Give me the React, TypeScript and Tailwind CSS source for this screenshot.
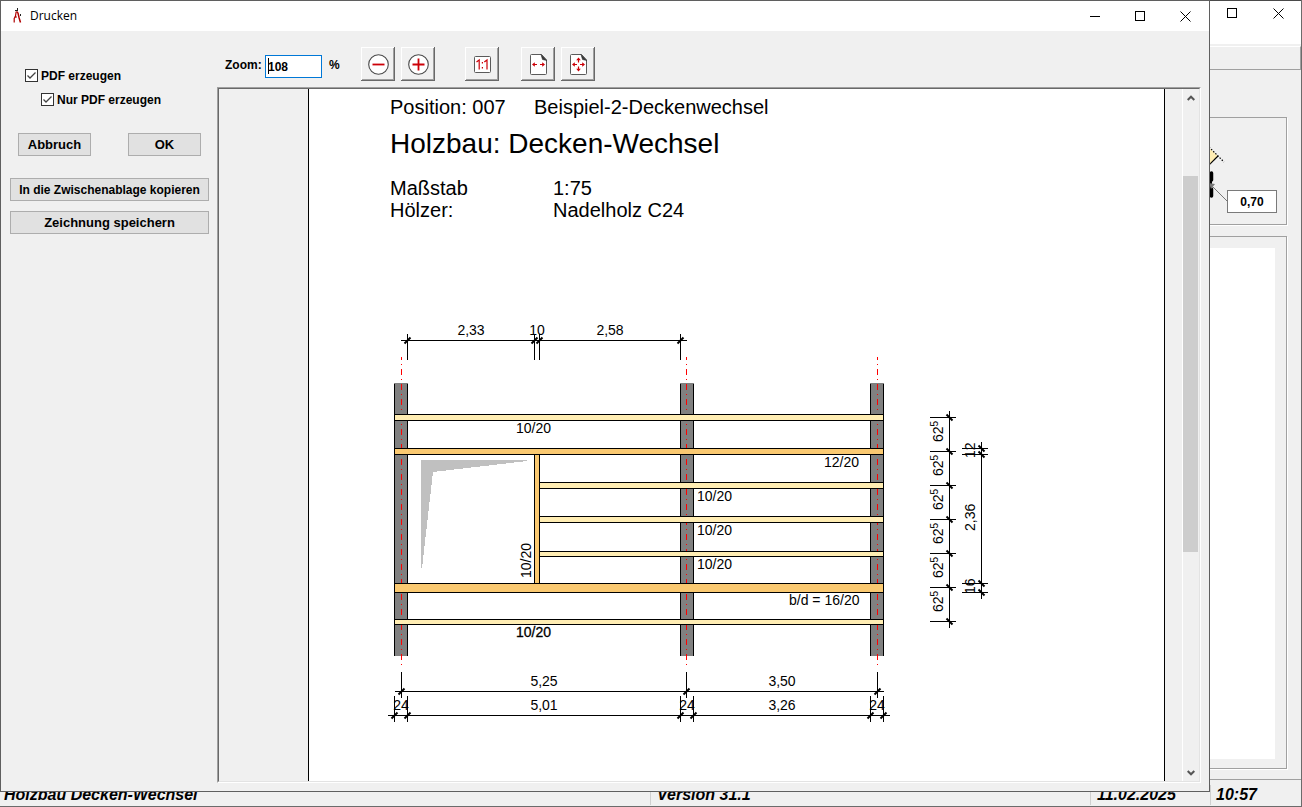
import React from "react";

const YELLOW = "#ffedb3";
const ORANGE = "#fac971";

function Minimize() {
  return (
    <svg width="11" height="11" viewBox="0 0 11 11" shapeRendering="crispEdges">
      <rect x="0" y="5" width="10" height="1" fill="#000" />
    </svg>
  );
}

function Maximize() {
  return (
    <svg width="11" height="11" viewBox="0 0 11 11" shapeRendering="crispEdges">
      <rect x="0.5" y="0.5" width="9" height="9" fill="none" stroke="#000" />
    </svg>
  );
}

function Close() {
  return (
    <svg width="11" height="11" viewBox="0 0 11 11">
      <path d="M0.5 0.5 L10.5 10.5 M10.5 0.5 L0.5 10.5" stroke="#000" strokeWidth="1" />
    </svg>
  );
}

function AppIcon() {
  return (
    <svg width="12" height="16" viewBox="0 0 12 16" aria-hidden="true">
      <path d="M4.2 3.5 L3.4 8.500 L2.200 10.500 L2.2 14.500" fill="none" stroke="#b00000" strokeWidth="1.2" />
      <path d="M4.6 3.5 L6 5 L7 9.500 L8.5 14.500" fill="none" stroke="#b00000" strokeWidth="1.5" />
      <path d="M2.5 9 H5" stroke="#b00000" strokeWidth="1" />
      <rect x="5" y="0" width="1" height="3" fill="#222" />
      <rect x="3" y="2" width="3" height="1" fill="#222" />
      <rect x="8" y="6" width="1" height="2" fill="#222" />
    </svg>
  );
}

function ToolButton({ label, children }: { label: string; children: React.ReactNode }) {
  return (
    <button
      type="button"
      aria-label={label}
      className="flex size-[34px] shrink-0 items-center justify-center bg-[#f0f0f0] pt-px pl-px shadow-[inset_-1px_-1px_#696969,inset_1px_1px_#ffffff,inset_-2px_-2px_#a0a0a0]"
    >
      {children}
    </button>
  );
}

function CircleIcon({ plus }: { plus?: boolean }) {
  return (
    <svg width="21" height="21" viewBox="0 0 21 21">
      <circle cx="10.5" cy="10.5" r="9.8" fill="#fff" stroke="#4a4a4a" strokeWidth="1.1" />
      <path d={plus ? "M4.5 10.5 H16.500 M10.5 4.500 V16.500" : "M4.5 10.5 H16.500"} stroke="#cc0008" strokeWidth="1.8" />
    </svg>
  );
}

function OneToOneIcon() {
  return (
    <svg width="17" height="17" viewBox="0 0 17 17">
      <rect x="0.5" y="0.5" width="16" height="16" rx="1" fill="#fff" stroke="#5a5a5a" />
      <path d="M2.500 6 L5.2 4 V13.500 M10.300 6 L13 4 V13.500" fill="none" stroke="#cc0008" strokeWidth="1.2" />
      <rect x="7.800" y="6" width="1.2" height="1.5" fill="#cc0008" />
      <rect x="7.800" y="11" width="1.2" height="1.5" fill="#cc0008" />
    </svg>
  );
}

function SheetIcon({ all }: { all?: boolean }) {
  return (
    <svg width="17" height="21" viewBox="0 0 17 21">
      <path
        d="M1.5 0.5 H11.500 L16.500 6 V19.500 Q16.500 20.500 15.500 20.500 H1.500 Q0.500 20.500 0.500 19.500 V1.500 Q0.500 0.500 1.500 0.500 Z"
        fill="#fff"
        stroke="#5a5a5a"
      />
      <path d="M11 0.500 L16.800 6.500 L12.500 5.500 Z" fill="#333" stroke="#333" strokeWidth="0.6" />
      <path
        d="M2 10.5 L4.800 8.2 V9.900 H7 V11.100 H4.800 V12.800 Z M15 10.5 L12.200 8.2 V9.900 H10 V11.100 H12.200 V12.800 Z"
        fill="#cc0008"
      />
      {all && (
        <path
          d="M8.5 3.500 L6.200 6.300 H7.900 V8.500 H9.100 V6.300 H10.800 Z M8.5 17.500 L6.200 14.700 H7.900 V12.500 H9.100 V14.700 H10.800 Z"
          fill="#cc0008"
        />
      )}
    </svg>
  );
}

function CheckOption({ id, label, indent }: { id: string; label: string; indent?: boolean }) {
  return (
    <div className={indent ? "ml-4 flex h-[13px] items-center gap-[3px]" : "flex h-[13px] items-center gap-[3px]"}>
      <span className="relative flex size-[13px]">
        <input
          id={id}
          type="checkbox"
          defaultChecked
          className="peer size-[13px] appearance-none border border-[#333333] bg-white"
        />
        <svg
          className="pointer-events-none absolute inset-0 hidden peer-checked:block"
          width="13"
          height="13"
          viewBox="0 0 13 13"
        >
          <path d="M2.5 6.5 L5 9 L10.5 3.5" fill="none" stroke="#444" strokeWidth="1.3" />
        </svg>
      </span>
      <label htmlFor={id} className="pt-0.5 text-[12px] leading-[13px] font-bold whitespace-nowrap">
        {label}
      </label>
    </div>
  );
}

const pushButton =
  "flex h-[23px] items-center justify-center border border-[#adadad] bg-[#e1e1e1] font-bold whitespace-nowrap";

/* Dimension chains and framing plan */

function Beam({ x = 394, y, h, fill }: { x?: number; y: number; h: number; fill: string }) {
  return (
    <g>
      <rect x={x} y={y} width={884 - x} height={h} fill="#000" />
      <rect x={x + 1} y={y + 1} width={882 - x} height={h - 2} fill={fill} />
    </g>
  );
}

function Wall({ x }: { x: number }) {
  return (
    <g>
      <rect x={x} y="383" width="14" height="273" fill="#808080" />
      <rect x={x} y="384" width="1" height="272" fill="#000" />
      <rect x={x + 13} y="384" width="1" height="272" fill="#000" />
    </g>
  );
}

function HChain({
  y,
  from,
  to,
  top,
  bottom,
  marks,
}: {
  y: number;
  from: number;
  to: number;
  top: number;
  bottom: number;
  marks: number[];
}) {
  return (
    <g>
      <rect x={from} y={y} width={to - from} height="1" />
      {marks.map((m) => (
        <g key={m}>
          <rect x={m} y={top} width="1" height={bottom - top} />
          <path
            d={`M${m - 2.5} ${y + 3.5} L${m + 3.5} ${y - 2.5}`}
            stroke="#000"
            strokeWidth="2"
            shapeRendering="auto"
          />
        </g>
      ))}
    </g>
  );
}

function VChain({
  x,
  from,
  to,
  left,
  right,
  marks,
}: {
  x: number;
  from: number;
  to: number;
  left: number;
  right: number;
  marks: number[];
}) {
  return (
    <g>
      <rect x={x} y={from} width="1" height={to - from} />
      {marks.map((m) => (
        <g key={m}>
          <rect x={left} y={m} width={right - left} height="1" />
          <path
            d={`M${x - 2.5} ${m - 2.5} L${x + 3.5} ${m + 3.5}`}
            stroke="#000"
            strokeWidth="2"
            shapeRendering="auto"
          />
        </g>
      ))}
    </g>
  );
}

function Upright({ x, y, children }: { x: number; y: number; children: React.ReactNode }) {
  return <text transform={`translate(${x} ${y}) rotate(-90)`}>{children}</text>;
}

function FramingPlan() {
  return (
    <svg
      width="610"
      height="415"
      viewBox="385 315 610 415"
      shapeRendering="crispEdges"
      className="block shrink-0 font-['Liberation_Sans',Arial,sans-serif] text-[14px]"
      role="img"
      aria-label="Decken-Wechsel"
    >
      <path d="M421 460 H527 V461 L433 472 L422 568 H421 Z" fill="#c0c0c0" />
      <Wall x={394} />
      <Wall x={680} />
      <Wall x={870} />
      {[401, 686, 877].map((x) => (
        <path
          key={x}
          d={`M${x + 0.5} 357 V669`}
          stroke="#ff0000"
          strokeWidth="1"
          strokeDasharray="6 4 1 4"
          strokeDashoffset="3"
        />
      ))}
      <Beam y={414} h={7} fill={YELLOW} />
      <Beam y={448} h={7} fill={ORANGE} />
      <Beam x={539} y={482} h={7} fill={YELLOW} />
      <Beam x={539} y={516} h={7} fill={YELLOW} />
      <Beam x={539} y={551} h={6} fill={YELLOW} />
      <rect x="534" y="455" width="6" height="128" fill="#000" />
      <rect x="535" y="455" width="4" height="128" fill={ORANGE} />
      <Beam y={583} h={10} fill={ORANGE} />
      <Beam y={619} h={6} fill={YELLOW} />

      <HChain y={340} from={401} to={687} top={334} bottom={360} marks={[407, 534, 539, 680]} />
      <HChain y={691} from={395} to={884} top={672} bottom={698} marks={[401, 686, 877]} />
      <HChain y={715} from={388} to={890} top={696} bottom={722} marks={[394, 407, 680, 693, 870, 883]} />
      <VChain x={949} from={411} to={628} left={930} right={956} marks={[417, 451, 485, 519, 553, 587, 621]} />
      <VChain x={981} from={442} to={599} left={962} right={988} marks={[448, 454, 583, 592]} />

      <g textAnchor="middle">
        <text x="471" y="335">2,33</text>
        <text x="537" y="335">10</text>
        <text x="610" y="335">2,58</text>
        <text x="544" y="686">5,25</text>
        <text x="782" y="686">3,50</text>
        <text x="401" y="710">24</text>
        <text x="544" y="710">5,01</text>
        <text x="687" y="710">24</text>
        <text x="782" y="710">3,26</text>
        <text x="877" y="710">24</text>
      </g>

      <text x="516" y="433">10/20</text>
      <text x="824" y="467">12/20</text>
      <text x="697" y="501">10/20</text>
      <text x="697" y="535">10/20</text>
      <text x="697" y="569">10/20</text>
      <text x="789" y="605">b/d = 16/20</text>
      <text x="516" y="637" stroke="#000" strokeWidth="0.3">10/20</text>

      <Upright x={531} y={578}>10/20</Upright>
      {[442, 476, 510, 544, 578, 612].map((y) => (
        <Upright key={y} x={943} y={y}>
          62
          <tspan dy="-5" className="text-[10px]">5</tspan>
        </Upright>
      ))}
      <Upright x={975} y={458}>12</Upright>
      <Upright x={975} y={531}>2,36</Upright>
      <Upright x={975} y={594}>16</Upright>
    </svg>
  );
}

function PreviewSheet() {
  return (
    <article className="mr-[17px] ml-[89px] min-w-0 flex-1 overflow-hidden border-x border-black bg-white pt-[7px] pl-[81px]">
      <div className="flex text-[20px] leading-[22px] whitespace-nowrap">
        <span className="w-36">Position: 007</span>
        <span>Beispiel-2-Deckenwechsel</span>
      </div>
      <h1 className="mt-[10px] text-[28px] leading-8 whitespace-nowrap">Holzbau: Decken-Wechsel</h1>
      <dl className="mt-[17px] grid grid-cols-[163px_1fr] text-[20px] leading-[22px]">
        <dt>Maßstab</dt>
        <dd>1:75</dd>
        <dt>Hölzer:</dt>
        <dd>Nadelholz C24</dd>
      </dl>
      <div className="-ml-[5px] pt-[94px]">
        <FramingPlan />
      </div>
    </article>
  );
}

function ScrollBar() {
  return (
    <div className="flex w-[17px] shrink-0 flex-col border-l border-white bg-[#f0f0f0]">
      <button type="button" aria-label="Nach oben" className="flex h-[17px] items-center justify-center">
        <svg width="8" height="6" viewBox="0 0 8 6">
          <path d="M0.7 5 L4 1.7 L7.3 5" fill="none" stroke="#555" strokeWidth="2" />
        </svg>
      </button>
      <div className="flex-[70]" />
      <div className="mr-px flex-[376] bg-[#cdcdcd]" />
      <div className="flex-[212]" />
      <button type="button" aria-label="Nach unten" className="flex h-[17px] items-center justify-center">
        <svg width="8" height="6" viewBox="0 0 8 6">
          <path d="M0.7 1 L4 4.3 L7.3 1" fill="none" stroke="#555" strokeWidth="2" />
        </svg>
      </button>
    </div>
  );
}

function PrintDialog() {
  return (
    <section
      role="dialog"
      aria-label="Drucken"
      className="absolute top-0 right-[92px] bottom-[15px] left-0 flex flex-col border border-[#5f5f5f] bg-[#f0f0f0]"
    >
      <header className="flex h-[30px] shrink-0 items-center bg-white pr-px pl-[11px]">
        <AppIcon />
        <span className="ml-1.5 flex-1 font-['Open_Sans','Noto_Sans',sans-serif] text-[12px]">Drucken</span>
        <button type="button" aria-label="Minimieren" className="flex h-full w-[45px] items-center justify-center">
          <Minimize />
        </button>
        <button type="button" aria-label="Maximieren" className="flex h-full w-[45px] items-center justify-center">
          <Maximize />
        </button>
        <button type="button" aria-label="Schließen" className="flex h-full w-[45px] items-center justify-center">
          <Close />
        </button>
      </header>
      <div className="flex min-h-0 flex-1">
        <aside className="flex w-[216px] shrink-0 flex-col pt-[38px] pr-2 pl-[9px]">
          <div className="flex flex-col gap-[11px] pl-[15px]">
            <CheckOption id="pdf" label="PDF erzeugen" />
            <CheckOption id="only-pdf" label="Nur PDF erzeugen" indent />
          </div>
          <div className="mt-[27px] flex justify-between px-2 text-[13px]">
            <button type="button" className={`${pushButton} w-[73px]`}>Abbruch</button>
            <button type="button" className={`${pushButton} w-[73px]`}>OK</button>
          </div>
          <div className="mt-[22px] flex flex-col gap-[10px]">
            <button type="button" className={`${pushButton} text-[12px]`}>In die Zwischenablage kopieren</button>
            <button type="button" className={`${pushButton} text-[13px]`}>Zeichnung speichern</button>
          </div>
        </aside>
        <div className="flex min-w-0 flex-1 flex-col pr-2 pb-2">
          <div className="flex h-14 shrink-0 items-center pt-4 pb-1.5 pl-2">
            <label htmlFor="zoom" className="w-10 pt-0.5 text-[12px] font-bold">Zoom:</label>
            <div className="relative mt-[5px]">
              <input
                id="zoom"
                defaultValue="108"
                className="block h-[23px] w-[57px] border border-[#0078d7] bg-white px-0.5 text-[12px] font-bold outline-none"
              />
              <span className="absolute top-[3px] left-[3px] h-4 w-px bg-black" />
            </div>
            <span className="ml-[7px] w-8 pt-0.5 text-[12px] font-bold">%</span>
            <div className="flex gap-1.5">
              <ToolButton label="Verkleinern"><CircleIcon /></ToolButton>
              <ToolButton label="Vergrößern"><CircleIcon plus /></ToolButton>
            </div>
            <div className="ml-[30px] flex">
              <ToolButton label="Originalgröße"><OneToOneIcon /></ToolButton>
            </div>
            <div className="ml-[22px] flex gap-1.5">
              <ToolButton label="Seitenbreite"><SheetIcon /></ToolButton>
              <ToolButton label="Ganze Seite"><SheetIcon all /></ToolButton>
            </div>
          </div>
          <div className="flex min-h-0 flex-1 border border-t-[#a0a0a0] border-r-white border-b-white border-l-[#a0a0a0]">
            <div className="flex min-w-0 flex-1 border border-t-[#696969] border-r-[#e3e3e3] border-b-[#e3e3e3] border-l-[#696969]">
              <PreviewSheet />
              <ScrollBar />
            </div>
          </div>
        </div>
      </div>
    </section>
  );
}

function MainWindow() {
  return (
    <div className="flex h-full flex-col border-r border-b border-[#6b6b6b] bg-[#f0f0f0]">
      <header className="flex h-11 shrink-0 items-start justify-end border-t border-[#4a4a4a] bg-white">
        <button type="button" aria-label="Fenster maximieren" className="flex h-6 w-[46px] items-center justify-center">
          <Maximize />
        </button>
        <button type="button" aria-label="Fenster schließen" className="flex h-6 w-[46px] items-center justify-center">
          <Close />
        </button>
      </header>
      <div className="mt-0.5 h-6 shrink-0 border border-t-white border-r-[#a0a0a0] border-b-[#a0a0a0] border-l-white" />
      <div className="mt-[47px] mr-[14px] flex h-[108px] shrink-0 justify-end border border-[#a0a0a0] pr-[9px] shadow-[1px_1px_#ffffff]">
        <svg width="17" height="70" viewBox="1210 145 17 70" className="mt-[27px]">
          <path d="M1206 161 L1206 145 L1218 156 L1209 165 Z" fill="#ffedb3" />
          <path d="M1218 156 L1209 165" stroke="#000" strokeWidth="1.2" />
          <path d="M1209 147 L1224 162" stroke="#000" strokeWidth="1.2" strokeDasharray="1.5 1.5" />
          <path d="M1211.5 173 V180 M1211.5 189 V196" stroke="#000" strokeWidth="3.500" strokeLinecap="round" />
          <path d="M1211 173 V196" stroke="#000" strokeWidth="2" />
          <path d="M1213 187 L1227 201" stroke="#777" />
          <path d="M1209 183 L1215 184 L1211 189 Z" fill="#777" />
        </svg>
        <input
          aria-label="Maß"
          defaultValue="0,70"
          className="mt-[72px] h-[23px] w-[50px] border border-[#7a7a7a] bg-white text-center text-[12px] font-bold"
        />
      </div>
      <div className="mt-[11px] mr-[14px] flex min-h-0 flex-1 border border-[#a0a0a0] pt-[11px] pr-[11px] pb-[9px] shadow-[1px_1px_#ffffff]">
        <div className="flex-1 bg-white" />
      </div>
      <footer className="mt-[10px] flex h-[27px] shrink-0 items-center border-t border-[#a0a0a0] pt-1 text-[16px] leading-5 font-bold whitespace-nowrap italic">
        <span className="flex-1 pl-1">Holzbau Decken-Wechsel</span>
        <span className="w-[440px] border-l border-[#d0d0d0] pl-1.5">Version 31.1</span>
        <span className="w-[120px] border-l border-[#d0d0d0] pl-1.5">11.02.2025</span>
        <span className="w-[91px] border-l border-[#d0d0d0] pl-[5px]">10:57</span>
      </footer>
    </div>
  );
}

export default function App() {
  return (
    <main className="relative h-screen min-h-[640px] overflow-hidden font-['Liberation_Sans',Arial,sans-serif] text-black">
      <MainWindow />
      <PrintDialog />
    </main>
  );
}
